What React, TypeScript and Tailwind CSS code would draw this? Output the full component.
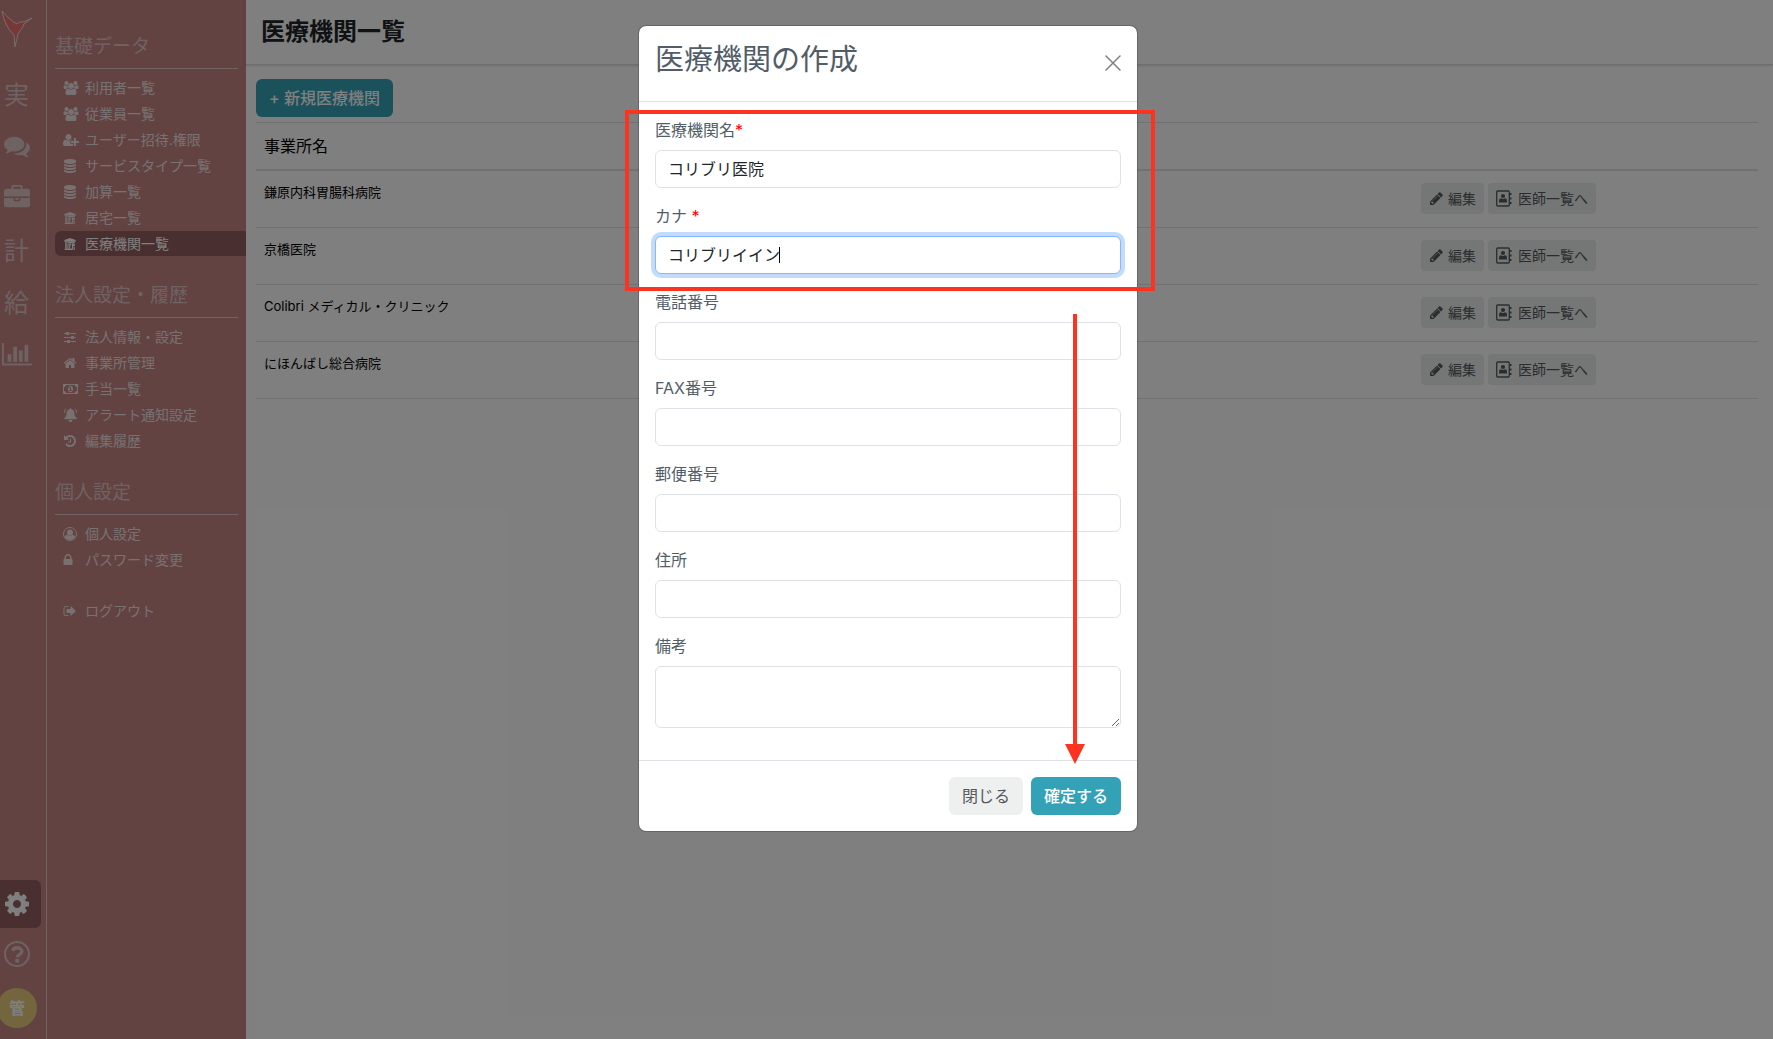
import React from "react";

type IconProps = { name: keyof typeof ICONS; className?: string };

const ICONS = {
  cog: [1792, "M1152 896q0-106-75-181t-181-75-181 75-75 181 75 181 181 75 181-75 75-181zm512-109v222q0 12-8 23t-20 13l-185 28q-19 54-39 91 35 50 107 138 10 12 10 25t-9 23q-27 37-99 108t-94 71q-12 0-26-9l-138-108q-44 23-91 38-16 136-29 186-7 28-36 28h-222q-14 0-24.5-8.5t-11.5-21.5l-28-184q-49-16-90-37l-141 107q-10 9-25 9-14 0-25-11-126-114-165-168-7-10-7-23 0-12 8-23 15-21 51-66.5t54-70.5q-27-50-41-99l-183-27q-13-2-21-12.5t-8-23.5v-222q0-12 8-23t19-13l186-28q14-46 39-92-40-57-107-138-10-12-10-24 0-10 9-23 26-36 98.5-107.5t94.5-71.5q13 0 26 10l138 107q44-23 91-38 16-136 29-186 7-28 36-28h222q14 0 24.5 8.5t11.5 21.5l28 184q49 16 90 37l142-107q9-9 24-9 13 0 25 10 129 119 165 170 7 8 7 22 0 12-8 23-15 21-51 66.5t-54 70.5q26 50 41 98l183 28q13 2 21 12.5t8 23.5z"],
  comments: [1792, "M1408 768q0 139-94 257t-256.5 186.5-353.5 68.5q-86 0-176-16-124 88-278 128-36 9-86 16h-3q-11 0-20.5-8t-11.5-21q-1-3-1-6.500t.5-6.500 2-6l2.500-5 3.500-5.500 4-5 4.500-5 4-4.500q5-6 23-25t26-29.500 22.500-29 25-38.500 20.500-44q-124-72-195-177t-71-224q0-139 94-257t256.500-186.500 353.500-68.500 353.500 68.500 256.500 186.500 94 257zm384 256q0 120-71 224.500t-195 176.500q10 24 20.500 44t25 38.500 22.500 29 26 29.500 23 25q1 1 4 4.500t4.500 5 4 5 3.500 5.500l2.500 5 2 6 .5 6.500-1 6.500q-3 14-13 22t-22 7q-50-7-86-16-154-40-278-128-90 16-176 16-271 0-472-132 58 4 88 4 161 0 309-45t264-129q125-92 192-212t67-254q0-77-23-152 129 71 204 178t75 230z"],
  briefcase: [1792, "M640 256h512v-128h-512v128zm1152 640v480q0 66-47 113t-113 47h-1472q-66 0-113-47t-47-113v-480h672v160q0 26 19 45t45 19h320q26 0 45-19t19-45v-160h672zm-768 0v128h-256v-128h256zm768-480v384h-1792v-384q0-66 47-113t113-47h352v-160q0-40 28-68t68-28h576q40 0 68 28t28 68v160h352q66 0 113 47t47 113z"],
  chart: [2048, "M640 896v512h-256v-512h256zm384-512v1024h-256v-1024h256zm1024 1152v128h-2048v-1536h128v1408h1920zm-640-896v768h-256v-768h256zm384-384v1152h-256v-1152h256z"],
  pencil: [1792, "M491 1536l91-91-235-235-91 91v107h128v128h107zm523-928q0-22-22-22-10 0-17 7l-542 542q-7 7-7 17 0 22 22 22 10 0 17-7l542-542q7-7 7-17zm-54-192l416 416-832 832h-416v-416zm683 96q0 53-37 90l-166 166-416-416 166-165q36-38 90-38 53 0 91 38l235 234q37 39 37 91z"],
  home: [1792, "M1472 992v480q0 26-19 45t-45 19h-384v-384h-256v384h-384q-26 0-45-19t-19-45v-480q0-1 .5-3t.5-3l575-474 575 474q1 2 1 6zm223-69l-62 74q-8 9-21 11h-3q-13 0-21-7l-692-577-692 577q-12 8-24 7-13-2-21-11l-62-74q-8-10-7-23.5t11-21.5l719-599q32-26 76-26t76 26l244 204v-195q0-14 9-23t23-9h192q14 0 23 9t9 23v408l219 182q10 8 11 21.5t-7 23.5z"],
  lock: [1792, "M640 768h512v-192q0-106-75-181t-181-75-181 75-75 181v192zm832 96v576q0 40-28 68t-68 28h-960q-40 0-68-28t-28-68v-576q0-40 28-68t68-28h32v-192q0-184 132-316t316-132 316 132 132 316v192h32q40 0 68 28t28 68z"],
  signOut: [1792, "M704 1440q0 4 1 20t.5 26.5-3 23.5-10 19.5-20.5 6.5h-320q-119 0-203.500-84.500t-84.500-203.500v-704q0-119 84.500-203.500t203.500-84.500h320q13 0 22.500 9.500t9.500 22.500q0 4 1 20t.5 26.500-3 23.500-10 19.500-20.500 6.500h-320q-66 0-113 47t-47 113v704q0 66 47 113t113 47h312l11.500 1 11.500 3 8 5.500 7 9 2 13.500zm928-544q0 26-19 45l-544 544q-19 19-45 19t-45-19-19-45v-288h-448q-26 0-45-19t-19-45v-384q0-26 19-45t45-19h448v-288q0-26 19-45t45-19 45 19l544 544q19 19 19 45z"],
  history: [1792, "M1664 896q0 156-61 298t-164 245-245 164-298 61q-172 0-327-72.500t-264-204.500q-7-10-6.500-22.500t8.500-20.500l137-138q10-9 25-9 16 2 23 12 73 95 179 147t225 52q104 0 198.500-40.500t163.500-109.500 109.500-163.500 40.500-198.500-40.500-198.500-109.500-163.500-163.500-109.500-198.500-40.500q-98 0-188 35.500t-160 101.500l137 138q31 30 14 69-17 40-59 40h-448q-26 0-45-19t-19-45v-448q0-42 40-59 39-17 69 14l130 129q107-101 244.500-156.500t284.500-55.500q156 0 298 61t245 164 164 245 61 298zm-640-288v448q0 14-9 23t-23 9h-320q-14 0-23-9t-9-23v-64q0-14 9-23t23-9h224v-352q0-14 9-23t23-9h64q14 0 23 9t9 23z"],
  database: [1792, "M896 768q237 0 443-43t325-127v170q0 69-103 128t-280 93.500-385 34.500-385-34.500-280-93.500-103-128v-170q119 84 325 127t443 43zm0 768q237 0 443-43t325-127v170q0 69-103 128t-280 93.500-385 34.500-385-34.500-280-93.500-103-128v-170q119 84 325 127t443 43zm0-384q237 0 443-43t325-127v170q0 69-103 128t-280 93.500-385 34.500-385-34.500-280-93.500-103-128v-170q119 84 325 127t443 43zm0-1152q208 0 385 34.500t280 93.500 103 128v128q0 69-103 128t-280 93.500-385 34.500-385-34.500-280-93.500-103-128v-128q0-69 103-128t280-93.500 385-34.500z"],
  users: [2048, "M657 896q-162 5-265 128h-134q-82 0-138-40.500t-56-118.500q0-353 124-353 6 0 43.500 21t97.500 42.500 119 21.500q67 0 133-23-5 37-5 66 0 159 81 256zm1071 637q0 120-73 189.500t-194 69.500h-874q-121 0-194-69.500t-73-189.500q0-53 3.500-103.500t14-109 26.500-108.500 43-97.500 62-81 85.500-53.500 111.500-20q10 0 43 21.500t73 48 107 48 135 21.500 135-21.500 107-48 73-48 43-21.500q61 0 111.500 20t85.500 53.500 62 81 43 97.500 26.500 108.500 14 109 3.500 103.500zm-1024-1277q0 106-75 181t-181 75-181-75-75-181 75-181 181-75 181 75 75 181zm704 384q0 159-112.500 271.500t-271.500 112.500-271.500-112.500-112.500-271.500 112.500-271.500 271.500-112.500 271.500 112.500 112.500 271.500zm576 225q0 78-56 118.500t-138 40.500h-134q-103-123-265-128 81-97 81-256 0-29-5-66 66 23 133 23 59 0 119-21.500t97.500-42.500 43.500-21q124 0 124 353zm-128-609q0 106-75 181t-181 75-181-75-75-181 75-181 181-75 181 75 75 181z"],
  userPlus: [2048, "M704 896q-159 0-271.500-112.500t-112.500-271.500 112.500-271.500 271.500-112.500 271.500 112.500 112.500 271.500-112.500 271.500-271.500 112.500zm960 128h352q13 0 22.500 9.500t9.500 22.500v192q0 13-9.500 22.500t-22.500 9.500h-352v352q0 13-9.500 22.500t-22.500 9.500h-192q-13 0-22.500-9.500t-9.500-22.500v-352h-352q-13 0-22.500-9.500t-9.500-22.500v-192q0-13 9.500-22.500t22.500-9.500h352v-352q0-13 9.500-22.500t22.500-9.500h192q13 0 22.500 9.500t9.500 22.500v352zm-736 224q0 52 38 90t90 38h256v238q-68 50-171 50h-874q-121 0-194-69t-73-190q0-53 3.500-103.500t14-109 26.500-108.500 43-97.500 62-81 85.500-53.500 111.500-20q19 0 39 17 79 61 154.500 91.500t164.500 30.500 164.500-30.500 154.500-91.500q20-17 39-17 132 0 217 96h-223q-52 0-90 38t-38 90v192z"],
  sliders: [1792, "M480 1408v128h-352v-128h352zm352-128q26 0 45 19t19 45v256q0 26-19 45t-45 19h-256q-26 0-45-19t-19-45v-256q0-26 19-45t45-19h256zm160-384v128h-864v-128h864zm-640-512v128h-224v-128h224zm1312 1024v128h-736v-128h736zm-960-1152q26 0 45 19t19 45v256q0 26-19 45t-45 19h-256q-26 0-45-19t-19-45v-256q0-26 19-45t45-19h256zm640 512q26 0 45 19t19 45v256q0 26-19 45t-45 19h-256q-26 0-45-19t-19-45v-256q0-26 19-45t45-19h256zm320 128v128h-224v-128h224zm0-512v128h-864v-128h864z"],
  money: [1920, "M768 1152h384v-96h-128v-448h-114l-148 137 77 80q42-37 55-57h2v288h-128v96zm512-256q0 70-21 142t-59.500 134-101.500 101-138 39-138-39-101.500-101-59.500-134-21-142 21-142 59.500-134 101.500-101 138-39 138 39 101.500 101 59.500 134 21 142zm512 256v-512q-106 0-181-75t-75-181h-1152q0 106-75 181t-181 75v512q106 0 181 75t75 181h1152q0-106 75-181t181-75zm128-832v1152q0 26-19 45t-45 19h-1792q-26 0-45-19t-19-45v-1152q0-26 19-45t45-19h1792q26 0 45 19t19 45z"],
  museum: [1792, "M896 128l720 256v220h-1440v-220zM290 650h180v780h-180zM570 650h932v160h-932zM570 860h140v570h-140zM790 860h250v180h-120v390h-130zM1140 860h362v300h-230v270h-132zM1350 1240h152v424h-152zM226 1480h1050v184h-1050z"],
  bell: [1920, "M960 1792q-107 0-181-75t-75-181h512q0 106-75 181t-181 75zM1050 128q300 60 380 330 30 120 40 330 20 320 260 490 60 50 40 110-20 60-90 60H240q-70 0-90-60-20-60 40-110 240-170 260-490 10-210 40-330 80-270 380-330 0-128 90-128t90 128zM340 60l90 80q-190 200-210 500l-120-10Q120 280 340 60zM1580 60l-90 80q190 200 210 500l120-10Q1800 280 1580 60z"],
} as const;

function Icon({ name, className = "" }: IconProps) {
  const [w, d] = ICONS[name];
  return (
    <svg viewBox={`0 0 ${w} 1792`} fill="currentColor" className={className} aria-hidden="true">
      <path d={d} />
    </svg>
  );
}

function UserCircle({ className = "" }: { className?: string }) {
  return (
    <svg viewBox="0 0 28 28" className={className} aria-hidden="true">
      <circle cx="14" cy="14" r="13" fill="none" stroke="currentColor" strokeWidth="2" />
      <circle cx="14" cy="11" r="6" fill="currentColor" />
      <path d="M3 20C4.500 17 7 15.500 9 15.500c2.800 2.700 7.200 2.700 10 0 2 0 4.500 1.500 6 4.500a13 13 0 0 1-22 0z" fill="currentColor" />
    </svg>
  );
}

function QuestionCircle({ className = "" }: { className?: string }) {
  return (
    <svg viewBox="0 0 26 26" className={className} aria-hidden="true">
      <circle cx="13" cy="13" r="12" fill="none" stroke="currentColor" strokeWidth="2" />
      <path d="M8.500 9.800C9.500 7.500 11.200 6.700 13.200 6.700c2.500 0 4.600 1.500 4.600 3.700 0 3.100-4.300 3-4.600 6" fill="none" stroke="currentColor" strokeWidth="3.400" />
      <rect x="11.200" y="18" width="4" height="3.600" fill="currentColor" />
    </svg>
  );
}

function AddressBook({ className = "" }: { className?: string }) {
  return (
    <svg viewBox="0 0 16 17" className={className} aria-hidden="true">
      <rect x="0.700" y="1" width="12.600" height="15" rx="1" fill="none" stroke="currentColor" strokeWidth="1.300" />
      <path d="M14 3h1.500v2H14zM14 7.500h1.500v2H14zM14 12h1.500v2H14z" fill="currentColor" />
      <circle cx="7" cy="6" r="2.100" fill="currentColor" />
      <path d="M3 12.500V11c0-2 1-2.700 2-2.700 1.200.9 2.800.9 4 0 1 0 2 .7 2 2.700v1.500z" fill="currentColor" />
    </svg>
  );
}

function Logo() {
  return (
    <svg viewBox="0 0 33 38" className="h-[38px] w-[33px]" aria-label="Colibri" role="img">
      <path
        d="M2 1c4 5 10 10.500 15 13 1.500-2 4-2.500 6.500-2L32 8l-8 6c-1 4-4.500 7-6 10L15 37l-1-12C8 19 4 12 2 1z"
        fill="#f07070"
        stroke="#e8dcdc"
        strokeWidth="1"
        strokeLinejoin="round"
      />
    </svg>
  );
}

type NavItem = { label: string; icon: React.ReactNode; active?: boolean };

const ic = "h-3.5 w-auto";

const MASTER: NavItem[] = [
  { label: "利用者一覧", icon: <Icon name="users" className={ic} /> },
  { label: "従業員一覧", icon: <Icon name="users" className={ic} /> },
  { label: "ユーザー招待.権限", icon: <Icon name="userPlus" className={ic} /> },
  { label: "サービスタイプ一覧", icon: <Icon name="database" className={ic} /> },
  { label: "加算一覧", icon: <Icon name="database" className={ic} /> },
  { label: "居宅一覧", icon: <Icon name="museum" className={ic} /> },
  { label: "医療機関一覧", icon: <Icon name="museum" className={ic} />, active: true },
];

const COMPANY: NavItem[] = [
  { label: "法人情報・設定", icon: <Icon name="sliders" className={ic} /> },
  { label: "事業所管理", icon: <Icon name="home" className={ic} /> },
  { label: "手当一覧", icon: <Icon name="money" className={ic} /> },
  { label: "アラート通知設定", icon: <Icon name="bell" className={ic} /> },
  { label: "編集履歴", icon: <Icon name="history" className={ic} /> },
];

const PERSONAL: NavItem[] = [
  { label: "個人設定", icon: <UserCircle className={ic} /> },
  { label: "パスワード変更", icon: <Icon name="lock" className="-ml-0.5 h-3.5 w-auto" /> },
];

function NavLink({ item }: { item: NavItem }) {
  return (
    <a
      href="#"
      className={
        item.active
          ? "flex h-[25px] items-center rounded-l-md bg-[#925f60] pl-2 text-white"
          : "flex h-[25px] items-center pl-2"
      }
    >
      <span className="flex w-[22px] items-center">{item.icon}</span>
      {item.label}
    </a>
  );
}

function NavGroup({ title, items }: { title: string; items: NavItem[] }) {
  return (
    <section>
      <h2 className="mr-2 border-b border-[#e0c8c8] pb-[7px] text-[19px] leading-7 text-[#e0c4c4]">{title}</h2>
      <ul className="mt-1.5 flex flex-col gap-px text-sm text-[#efe2e2]">
        {items.map((item) => (
          <li key={item.label}>
            <NavLink item={item} />
          </li>
        ))}
      </ul>
    </section>
  );
}

function Sidebar() {
  const rail = "flex h-[52px] w-[41px] items-center";
  return (
    <aside className="flex shrink-0 bg-[#c48682] text-[#ddc4c4]">
      <nav aria-label="メイン" className="flex w-[47px] flex-col border-r border-[#e0c8c8]">
        <a href="#" className="mt-2.5 mb-[22px]"><Logo /></a>
        <a href="#" className={`${rail} pl-1 text-[25px]`}>実</a>
        <a href="#" className={`${rail} pb-1 pl-1`} aria-label="メッセージ"><Icon name="comments" className="w-[26px]" /></a>
        <a href="#" className={`${rail} pb-1 pl-1`} aria-label="業務"><Icon name="briefcase" className="w-[26px]" /></a>
        <a href="#" className={`${rail} pl-1 text-[25px]`}>計</a>
        <a href="#" className={`${rail} pl-1 text-[25px]`}>給</a>
        <a href="#" className={`${rail} pb-1 pl-0.5`} aria-label="統計"><Icon name="chart" className="w-[30px]" /></a>
        <a href="#" aria-label="設定" className="mt-auto flex h-12 w-[41px] items-center rounded-r-md bg-[#925f60] pl-[3px] text-white">
          <Icon name="cog" className="w-7" />
        </a>
        <a href="#" aria-label="ヘルプ" className={`${rail} pl-1`}><QuestionCircle className="w-[26px]" /></a>
        <a href="#" className="mt-2 mb-[11px] -ml-[3px] flex size-10 items-center justify-center rounded-full bg-[#e6cb7c] text-base font-bold text-white">管</a>
      </nav>
      <nav aria-label="サブ" className="flex w-[199px] flex-col gap-[26px] pt-[33px] pl-2">
        <NavGroup title="基礎データ" items={MASTER} />
        <NavGroup title="法人設定・履歴" items={COMPANY} />
        <NavGroup title="個人設定" items={PERSONAL} />
        <div className="text-sm text-[#efe2e2]">
          <NavLink item={{ label: "ログアウト", icon: <Icon name="signOut" className={ic} /> }} />
        </div>
      </nav>
    </aside>
  );
}

const HOSPITALS = ["鎌原内科胃腸科病院", "京橋医院", "Colibri メディカル・クリニック", "にほんばし総合病院"];

function Main() {
  const btn = "flex h-[31px] items-center rounded bg-[#eaeeed] px-2 text-sm text-[#55595c]";
  return (
    <main className="flex-1 bg-white">
      <header className="flex h-[65px] items-center border-b border-[#dcdcdc] px-[15px] shadow-sm">
        <h1 className="text-2xl font-bold text-[#212529]">医療機関一覧</h1>
      </header>
      <div className="px-2.5 pt-3.5">
        <button type="button" className="h-[38px] rounded-md bg-[#34a2b6] px-[13px] text-base font-medium text-white">
          + 新規医療機関
        </button>
        <table className="mt-[5px] w-[calc(100%-5px)] table-fixed border-separate border-spacing-0 text-left text-black">
          <thead>
            <tr>
              <th scope="col" className="h-[49px] border-t border-b-2 border-[#dee2e6] px-2 text-base font-normal">事業所名</th>
              <th scope="col" aria-label="操作" className="w-[345px] border-t border-b-2 border-[#dee2e6]" />
            </tr>
          </thead>
          <tbody>
            {HOSPITALS.map((name) => (
              <tr key={name} className="align-top">
                <td className="border-b border-[#dee2e6] px-2 pt-3 text-[13px] leading-[18px]">{name}</td>
                <td className="border-b border-[#dee2e6] pt-3 pb-[13px]">
                  <div className="flex gap-1 pl-2">
                    <button type="button" className={btn}>
                      <Icon name="pencil" className="mr-1 h-[15px]" />
                      編集
                    </button>
                    <button type="button" className={btn}>
                      <AddressBook className="mr-1.5 h-[17px]" />
                      医師一覧へ
                    </button>
                  </div>
                </td>
              </tr>
            ))}
          </tbody>
        </table>
      </div>
    </main>
  );
}

const inputBase = "block h-[38px] w-full rounded-md border bg-white px-3 pb-0.5 text-base text-[#212529] outline-none";
const inputIdle = "border-[#dee2e6] focus:border-[#86b7fe] focus:ring-4 focus:ring-[#c2dbfe]";
const inputActive = "border-[#86b7fe] ring-4 ring-[#c2dbfe] caret-transparent";
const labelClass = "mb-2 block text-base leading-6 text-[#525d68]";

function Field({ id, label, star, value, active }: { id: string; label: string; star?: string; value?: string; active?: boolean }) {
  return (
    <div>
      <label htmlFor={id} className={labelClass}>
        {label}
        {star && <span className="text-[#ff0000]">{star}</span>}
      </label>
      <div className="relative">
        <input id={id} type="text" defaultValue={value} className={`${inputBase} ${active ? inputActive : inputIdle}`} />
        {active && <span aria-hidden="true" className="absolute top-[11px] left-[124px] h-4 w-px bg-black" />}
      </div>
    </div>
  );
}

function Modal() {
  return (
    <div className="absolute inset-0 flex items-start justify-center bg-black/50 pt-[25px] pl-[3px]">
      <div
        role="dialog"
        aria-modal="true"
        aria-labelledby="modal-title"
        className="relative w-[500px] rounded-lg border border-black/20 bg-white bg-clip-padding"
      >
        <div className="flex h-[76px] items-start justify-between border-b border-[#dee2e6] px-4 pt-4">
          <h2 id="modal-title" className="text-[29px] leading-9 text-[#525d68]">医療機関の作成</h2>
          <button type="button" aria-label="閉じる" className="mt-[13px] text-[#808080]">
            <svg viewBox="0 0 16 16" className="size-4" stroke="currentColor" strokeWidth="1.500" strokeLinecap="round" aria-hidden="true">
              <path d="M1 1l14 14M15 1L1 15" />
            </svg>
          </button>
        </div>
        <form id="hospital-form" className="flex flex-col gap-4 px-4 pt-4 pb-8">
          <Field id="name" label="医療機関名" star="*" value="コリブリ医院" />
          <Field id="kana" label="カナ" star=" *" value="コリブリイイン" active />
          <Field id="tel" label="電話番号" />
          <Field id="fax" label="FAX番号" />
          <Field id="zip" label="郵便番号" />
          <Field id="address" label="住所" />
          <div>
            <label htmlFor="note" className={labelClass}>備考</label>
            <textarea id="note" className="block h-[62px] w-full rounded-md border border-[#dee2e6] px-3 py-1.5 outline-none" />
          </div>
        </form>
        <div className="flex justify-end gap-2 border-t border-[#dee2e6] p-4">
          <button type="button" className="h-[38px] rounded-md bg-[#eef0f0] px-[13px] text-base text-[#55595c]">閉じる</button>
          <button type="submit" form="hospital-form" className="h-[38px] rounded-md bg-[#34a2b6] px-[13px] text-base font-medium text-white">
            確定する
          </button>
        </div>
        <div className="pointer-events-none absolute top-[84px] -right-[18px] -left-[14px] h-[181px] border-4 border-[#fb3320]" />
        <svg viewBox="0 0 20 450" className="pointer-events-none absolute top-[288px] right-[52px] h-[450px] w-5" fill="#fb3320" aria-hidden="true">
          <path d="M8 0h4v430h8L10 450 0 430h8z" />
        </svg>
      </div>
    </div>
  );
}

export default function App() {
  return (
    <div className="relative flex min-h-screen font-[Inter,'Noto_Sans_CJK_JP',sans-serif]">
      <Sidebar />
      <Main />
      <Modal />
    </div>
  );
}
